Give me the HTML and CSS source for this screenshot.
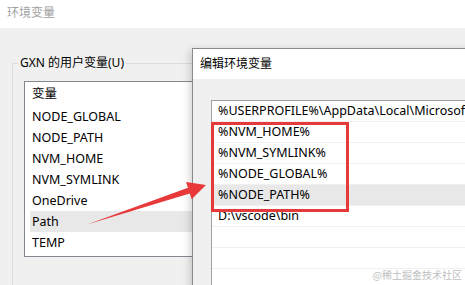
FILE: index.html
```html
<!DOCTYPE html>
<html lang="zh-CN">
<head>
    <meta charset="UTF-8">
    <title>编辑环境变量</title>
    <link rel="stylesheet" href="styles.css">
</head>
<body>

    <div class="desk">
        <!-- background window -->
        <div class="window">
            <div class="titlebar inactive">环境变量</div>
            <div class="window-body">
                <fieldset class="group">
                    <legend>GXN 的用户变量(U)</legend>
                    <div class="listview">
                        <div class="lv-header">变量</div>
                        <div class="lv-row">NODE_GLOBAL</div>
                        <div class="lv-row">NODE_PATH</div>
                        <div class="lv-row">NVM_HOME</div>
                        <div class="lv-row">NVM_SYMLINK</div>
                        <div class="lv-row">OneDrive</div>
                        <div class="lv-row selected">Path</div>
                        <div class="lv-row">TEMP</div>
                    </div>
                </fieldset>
            </div>
        </div>

        <!-- edit dialog on top -->
        <div class="dialog">
            <div class="titlebar">编辑环境变量</div>
            <div class="dialog-body">
                <div class="pathlist">
                    <div class="path-row">%USERPROFILE%\AppData\Local\Microsoft\WindowsApps</div>
                    <div class="path-row">%NVM_HOME%</div>
                    <div class="path-row">%NVM_SYMLINK%</div>
                    <div class="path-row">%NODE_GLOBAL%</div>
                    <div class="path-row selected">%NODE_PATH%</div>
                    <div class="path-row">D:\vscode\bin</div>
                    <div class="path-row"></div>
                    <div class="path-row"></div>
                    <div class="path-row"></div>
                </div>
            </div>
        </div>

        <!-- annotations -->
        <div class="mark-box"></div>
        <svg class="arrow" width="465" height="285" viewBox="0 0 465 285">
            <polygon points="87,224.5 188,187.7 186,182 206,185 191.7,199.2 189.8,193.5" fill="#e8393a"/>
        </svg>
        <div class="watermark">@稀土掘金技术社区</div>
    </div>

</body>
</html>
```

FILE: styles.css
```css
/* Basic Styles */
body {
    margin: 0;
    font-family: "Noto Sans", "Noto Sans CJK SC", sans-serif;
    font-size: 12px;
    color: #000;
}

.desk {
    position: relative;
    width: 465px;
    height: 285px;
    overflow: hidden;
    background-color: #f0f0f0;
}

.titlebar {
    background-color: #fff;
    padding-left: 7px;
}

.window .titlebar {
    height: 28px;
    line-height: 26px;
}

.titlebar.inactive {
    color: #a0a0a0;
}

.window-body {
    padding: 27px 0 0 12px;
}

.group {
    margin: 0;
    padding: 0 0 0 5px;
    width: 420px;
    height: 260px;
    border: 1px solid #dcdcdc;
    box-sizing: border-box;
}

.group legend {
    padding: 0 2px;
    line-height: 16px;
}

.listview {
    margin: 10px 0 0 6px;
    width: 300px;
    height: 176px;
    box-sizing: border-box;
    background-color: #fff;
    border: 1px solid #828790;
    font-size: 12.5px;
}

.lv-header {
    height: 24px;
    line-height: 24px;
    padding-left: 7px;
}

.lv-row {
    height: 21px;
    line-height: 21px;
    margin-left: 5px;
    padding-left: 2px;
}

.lv-row.selected,
.path-row.selected {
    background-color: #e8e8e8;
}

.dialog {
    position: absolute;
    left: 192px;
    top: 48px;
    width: 300px;
    height: 260px;
    background-color: #f0f0f0;
    border: 1px solid #8a8a8a;
    box-shadow: -2px 2px 8px rgba(0, 0, 0, 0.18);
}

.dialog .titlebar {
    height: 30px;
    line-height: 30px;
}

.dialog-body {
    padding: 21px 0 0 18px;
}

.pathlist {
    width: 300px;
    height: 200px;
    background-color: #fff;
    border: 1px solid #a0a0a0;
    font-size: 12.5px;
}

.path-row {
    height: 21px;
    line-height: 20px;
    padding-left: 6px;
    box-sizing: border-box;
    border-bottom: 1px solid #f0f0f0;
    white-space: nowrap;
}

.mark-box {
    position: absolute;
    left: 211px;
    top: 122px;
    width: 138px;
    height: 90px;
    box-sizing: border-box;
    border: 3px solid #e53a3c;
}

.arrow {
    position: absolute;
    left: 0;
    top: 0;
    pointer-events: none;
}

.watermark {
    position: absolute;
    right: 3px;
    bottom: 3px;
    font-family: "Noto Sans CJK SC", sans-serif;
    font-size: 10px;
    color: #c0c0c0;
}
```
